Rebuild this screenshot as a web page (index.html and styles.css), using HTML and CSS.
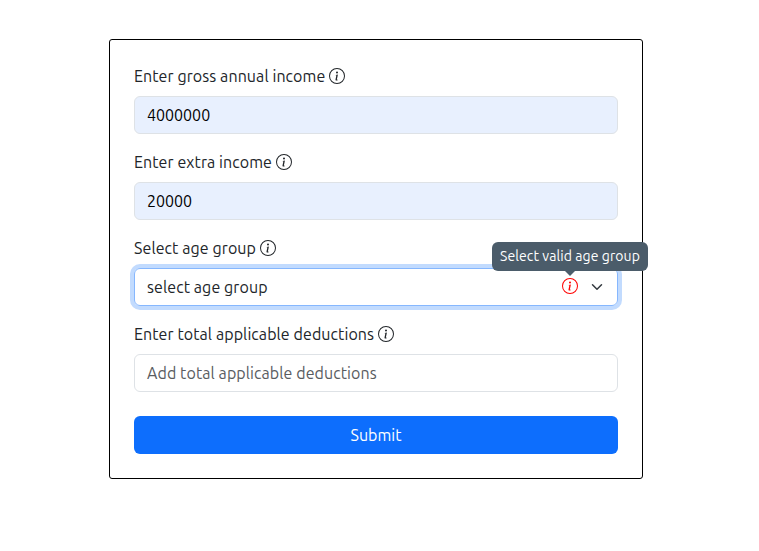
FILE: index.html
```html
<!DOCTYPE html>
<html lang="en">
<head>
<meta charset="utf-8">
<title>Tax Calculator</title>
<link rel="stylesheet" href="styles.css">
</head>
<body>
<svg width="0" height="0" class="defs"><symbol id="info" viewBox="0 0 16 16"><path d="M8 15A7 7 0 1 1 8 1a7 7 0 0 1 0 14m0 1A8 8 0 1 0 8 0a8 8 0 0 0 0 16"/><path d="m8.930 6.588-2.290.287-.082.380.450.083c.294.070.352.176.288.469l-.738 3.468c-.194.897.105 1.319.808 1.319.545 0 1.178-.252 1.465-.598l.088-.416c-.200.176-.492.246-.686.246-.275 0-.375-.193-.304-.533zM9 4.500a1 1 0 1 1-2 0 1 1 0 0 1 2 0"/></symbol></svg>
<form class="card">
  <div class="field">
    <label><span>Enter gross annual income</span><svg class="icon"><use href="#info"/></svg></label>
    <div class="control filled"><span>4000000</span></div>
  </div>
  <div class="field">
    <label><span>Enter extra income</span><svg class="icon"><use href="#info"/></svg></label>
    <div class="control filled"><span>20000</span></div>
  </div>
  <div class="field">
    <label><span>Select age group</span><svg class="icon"><use href="#info"/></svg></label>
    <div class="control select"><span>select age group</span>
      <span class="error"><svg class="icon"><use href="#info"/></svg><span class="tip">Select valid age group</span></span>
      <svg class="chevron" viewBox="0 0 16 16"><path d="m2 5 6 6 6-6"/></svg>
    </div>
  </div>
  <div class="field">
    <label><span>Enter total applicable deductions</span><svg class="icon"><use href="#info"/></svg></label>
    <div class="control hint"><span>Add total applicable deductions</span></div>
  </div>
  <button type="button">Submit</button>
</form>
</body>
</html>
```
FILE: styles.css
```css
* { box-sizing: border-box; }
body { margin: 0; background: #fff; color: #212529; font: 16px/24px Ubuntu, "Noto Sans", sans-serif; letter-spacing: .085px; }
.defs { position: absolute; }
.card { width: 534px; height: 440px; margin: 39px 0 0 109px; padding: 24px; border: 1px solid #000; border-radius: 3px; }
.field { height: 86px; }
label { display: flex; align-items: center; gap: 4px; height: 24px; margin-bottom: 8px; }
label span, .control > span:first-child { white-space: nowrap; }
.icon { width: 16px; height: 16px; fill: currentColor; flex: none; display: block; }
.control { display: flex; align-items: center; height: 38px; padding: 0 12px; border: 1px solid #dee2e6; border-radius: 6px; }
.filled { background: #e8f0fe; color: #000; letter-spacing: 0; }
.select { border-color: #86b7fe; box-shadow: 0 0 0 4px #c2dbfe; }
.hint { color: #595c5f; }
.error { position: relative; margin: 0 0 2px auto; color: #f00; }
.chevron { width: 16px; height: 12px; margin-left: 11px; fill: none; stroke: #343a40; stroke-width: 2; stroke-linecap: round; stroke-linejoin: round; }
.tip { position: absolute; left: 50%; bottom: 23px; width: 156px; height: 29px; transform: translateX(-50%); border-radius: 6px; background: #4b5c6a; color: #fff; font-size: 14px; line-height: 28px; text-align: center; white-space: nowrap; }
.tip::after { content: ""; position: absolute; left: 73px; top: 29px; border: 5px solid transparent; border-top-color: #4b5c6a; border-bottom: 0; }
button { display: block; width: 100%; height: 38px; margin-top: 8px; border: 0; border-radius: 6px; background: #0d6efd; color: #fff; font: inherit; letter-spacing: 0; }
```
